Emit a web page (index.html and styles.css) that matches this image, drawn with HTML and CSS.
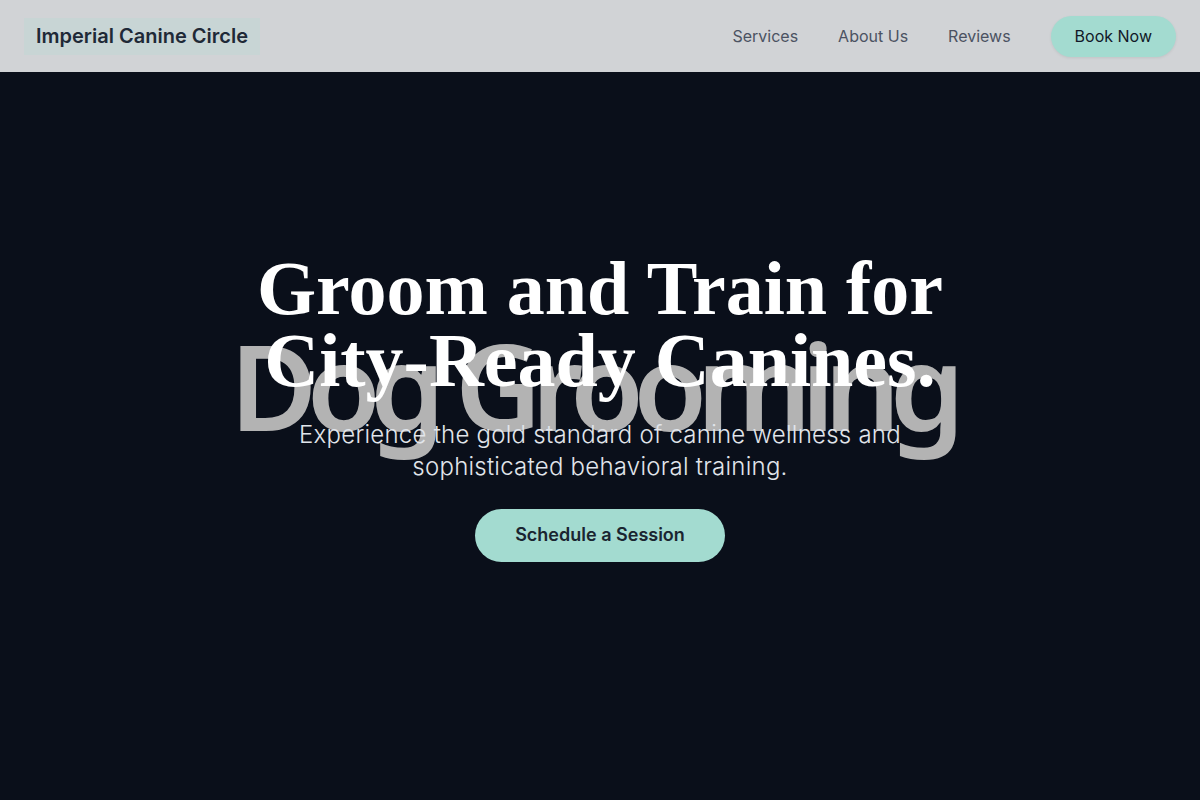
FILE: index.html
```html
<!DOCTYPE html>
<html lang="en">
<head>
<meta charset="utf-8">
<title>Imperial Canine Circle</title>
<link rel="stylesheet" href="styles.css">
</head>
<body>
<header class="nav">
  <a class="logo" href="#">Imperial Canine Circle</a>
  <nav class="links">
    <a href="#">Services</a>
    <a href="#">About Us</a>
    <a href="#">Reviews</a>
    <a class="book" href="#">Book Now</a>
  </nav>
</header>
<section class="hero">
  <div class="watermark">Dog Grooming</div>
  <div class="content">
    <h1>Groom and Train for<br>City-Ready Canines.</h1>
    <p>Experience the gold standard of canine wellness and<br>sophisticated behavioral training.</p>
    <a class="cta" href="#">Schedule a Session</a>
  </div>
</section>
</body>
</html>
```

FILE: styles.css
```css
* { box-sizing: border-box; }
html, body { margin: 0; padding: 0; }
body {
  font-family: Inter, "Noto Sans", sans-serif;
  background: #0a0f1a;
  width: 1200px;
  height: 800px;
  overflow: hidden;
}
a { text-decoration: none; }
.nav {
  height: 72px;
  background: #d1d3d6;
  display: flex;
  align-items: center;
  justify-content: space-between;
  padding: 0 24px;
}
.logo {
  background: #c8d5d5;
  color: #1f2937;
  font-weight: 600;
  font-size: 20px;
  line-height: 28px;
  padding: 4px 12px 5px;
}
.links {
  display: flex;
  align-items: center;
  gap: 40px;
}
.links a {
  color: #4b5262;
  font-size: 16px;
  line-height: 24px;
}
.links a.book {
  background: #a3dbd0;
  color: #111827;
  padding: 8px 24px 9px;
  border-radius: 999px;
  box-shadow: 0 1px 3px rgba(0,0,0,0.08);
}
.hero {
  position: relative;
  height: 728px;
  display: flex;
  justify-content: center;
  padding-top: 180px;
}
.watermark {
  position: absolute;
  left: 0;
  right: 0;
  top: 238px;
  padding-right: 16px;
  text-align: center;
  font-family: "Noto Sans", sans-serif;
  font-weight: 600;
  font-size: 120px;
  line-height: 150px;
  letter-spacing: -0.09em;
  color: #b3b3b3;
}
.content {
  position: relative;
  text-align: center;
}
h1 {
  margin: 0;
  font-family: "Liberation Serif", serif;
  font-weight: 700;
  font-size: 76px;
  line-height: 72px;
  color: #ffffff;
}
p {
  margin: 23px 0 0;
  font-size: 24px;
  font-weight: 300;
  letter-spacing: 0.01em;
  line-height: 32px;
  color: #e1e5eb;
}
.cta {
  display: inline-block;
  margin-top: 26px;
  background: #a3dbd0;
  color: #1a2530;
  font-weight: 600;
  font-size: 18px;
  line-height: 28px;
  padding: 12px 40px 13px;
  border-radius: 999px;
}
```
